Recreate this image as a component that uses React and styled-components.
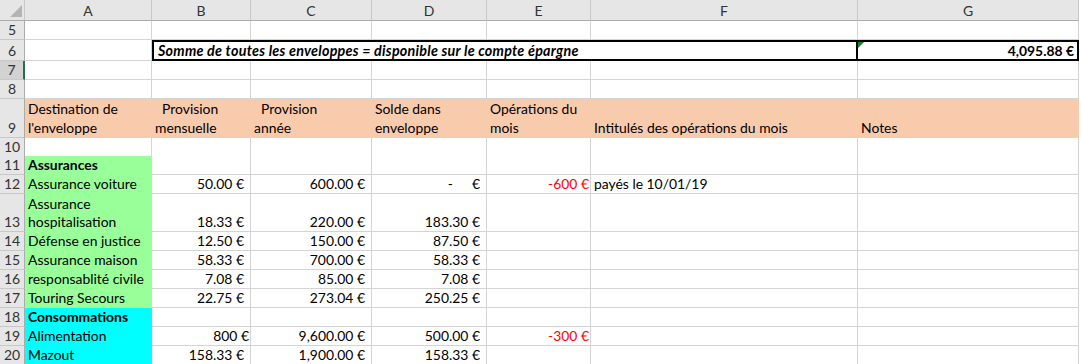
import React from 'react';
import styled, { createGlobalStyle } from 'styled-components';

const GlobalStyle = createGlobalStyle`
  html, body {
    margin: 0;
    padding: 0;
    background: #fff;
    overflow: hidden;
  }
`;

// row header + columns A..G
const COLS = '25px 127px 99px 121px 115px 104px 267px 221px';

const GREEN = '#99ff99';
const CYAN = '#00ffff';
const SALMON = '#f8cbad';

const Sheet = styled.div`
  width: 1081px;
  height: 364px;
  overflow: hidden;
  font-family: Lato, 'Liberation Sans', sans-serif;
  font-size: 13.9px;
  color: #000;
`;

const Row = styled.div`
  display: grid;
  grid-template-columns: ${COLS};
  height: ${(p) => p.$h || 19}px;
`;

const ColHead = styled.div`
  box-sizing: border-box;
  background: #e6e6e6;
  border-right: 1px solid #c8c8c8;
  border-bottom: 1px solid #ababab;
  display: flex;
  align-items: center;
  justify-content: center;
  color: #333;
  font-size: 14px;
`;

const Corner = styled(ColHead)`
  svg {
    display: block;
  }
`;

const RowHead = styled.div`
  box-sizing: border-box;
  background: ${(p) => (p.$selected ? '#d2d2d2' : '#e6e6e6')};
  border-bottom: 1px solid #c8c8c8;
  border-right: ${(p) => (p.$selected ? '2px solid #217346' : '1px solid #ababab')};
  display: flex;
  align-items: flex-end;
  justify-content: center;
  line-height: 18px;
  color: #333;
  font-size: 14px;
`;

const Cell = styled.div`
  box-sizing: border-box;
  grid-column: span ${(p) => p.$span || 1};
  background: ${(p) => p.$bg || '#fff'};
  border-right: 1px solid ${(p) => p.$bg || '#d4d4d4'};
  border-bottom: 1px solid ${(p) => p.$bg || '#d4d4d4'};
  display: flex;
  align-items: flex-end;
  justify-content: ${(p) => (p.$right ? 'flex-end' : 'flex-start')};
  padding: 0 ${(p) => p.$pr ?? 3}px 0 3px;
  line-height: 18px;
  white-space: pre;
  overflow: hidden;
  font-weight: ${(p) => (p.$bold ? 700 : 400)};
  color: ${(p) => (p.$red ? '#ff0000' : '#000')};
`;

const HeaderCell = styled(Cell)`
  line-height: 19px;
`;

const TotalLabel = styled(Cell)`
  border: 2px solid #000;
  font-size: 14.3px;
  font-style: italic;
  font-weight: 700;
  letter-spacing: 0.25px;
  align-items: center;
  padding-left: 4px;
`;

const TotalValue = styled(Cell)`
  position: relative;
  border: 2px solid #000;
  border-left: none;
  font-weight: 700;
  align-items: center;
  padding-right: 3px;

  &::before {
    content: '';
    position: absolute;
    top: 0;
    left: 0;
    border-top: 6px solid #1f7a2a;
    border-right: 6px solid transparent;
  }
`;

const Dash = styled.span`
  margin-right: 19px;
`;

function EmptyRow({ n, h, selected }) {
  return (
    <Row $h={h}>
      <RowHead $selected={selected}>{n}</RowHead>
      <Cell />
      <Cell />
      <Cell />
      <Cell />
      <Cell />
      <Cell />
      <Cell />
    </Row>
  );
}

function DataRow({ n, h, a, bg, bold, b, bPad = 6, c, d, e, f }) {
  return (
    <Row $h={h}>
      <RowHead>{n}</RowHead>
      <Cell $bg={bg} $bold={bold}>{a}</Cell>
      <Cell $right $pr={bPad}>{b}</Cell>
      <Cell $right $pr={6}>{c}</Cell>
      <Cell $right $pr={6}>{d}</Cell>
      <Cell $right $pr={1} $red>{e}</Cell>
      <Cell>{f}</Cell>
      <Cell />
    </Row>
  );
}

export default function App() {
  return (
    <Sheet>
      <GlobalStyle />
      <Row $h={21}>
        <Corner>
          <svg width="24" height="20" viewBox="0 0 24 20">
            <polygon points="22,5 22,17 10,17" fill="#b4b4b4" />
          </svg>
        </Corner>
        {['A', 'B', 'C', 'D', 'E', 'F', 'G'].map((l) => (
          <ColHead key={l}>{l}</ColHead>
        ))}
      </Row>

      <EmptyRow n={5} h={19} />

      <Row $h={21}>
        <RowHead>6</RowHead>
        <Cell />
        <TotalLabel $span={5}>Somme de toutes les enveloppes = disponible sur le compte épargne</TotalLabel>
        <TotalValue $right>4,095.88 €</TotalValue>
      </Row>

      <EmptyRow n={7} selected />
      <EmptyRow n={8} />

      <Row $h={39}>
        <RowHead>9</RowHead>
        <HeaderCell $bg={SALMON}>{'Destination de\nl\'enveloppe'}</HeaderCell>
        <HeaderCell $bg={SALMON}>{'  Provision\nmensuelle'}</HeaderCell>
        <HeaderCell $bg={SALMON}>{'  Provision\nannée'}</HeaderCell>
        <HeaderCell $bg={SALMON}>{'Solde dans\nenveloppe'}</HeaderCell>
        <HeaderCell $bg={SALMON}>{'Opérations du\nmois'}</HeaderCell>
        <HeaderCell $bg={SALMON}>Intitulés des opérations du mois</HeaderCell>
        <HeaderCell $bg={SALMON}>Notes</HeaderCell>
      </Row>

      <EmptyRow n={10} h={18} />

      <DataRow n={11} a="Assurances" bg={GREEN} bold />
      <DataRow
        n={12}
        a="Assurance voiture"
        bg={GREEN}
        b="50.00 €"
        c="600.00 €"
        d={<><Dash>-</Dash>€</>}
        e="-600 €"
        f="payés le 10/01/19"
      />
      <DataRow n={13} h={38} a={'Assurance\nhospitalisation'} bg={GREEN} b="18.33 €" c="220.00 €" d="183.30 €" />
      <DataRow n={14} a="Défense en justice" bg={GREEN} b="12.50 €" c="150.00 €" d="87.50 €" />
      <DataRow n={15} a="Assurance maison" bg={GREEN} b="58.33 €" c="700.00 €" d="58.33 €" />
      <DataRow n={16} a="responsablité civile" bg={GREEN} b="7.08 €" c="85.00 €" d="7.08 €" />
      <DataRow n={17} a="Touring Secours" bg={GREEN} b="22.75 €" c="273.04 €" d="250.25 €" />
      <DataRow n={18} a="Consommations" bg={CYAN} bold />
      <DataRow n={19} a="Alimentation" bg={CYAN} b="800 €" bPad={1} c="9,600.00 €" d="500.00 €" e="-300 €" />
      <DataRow n={20} a="Mazout" bg={CYAN} b="158.33 €" c="1,900.00 €" d="158.33 €" />
    </Sheet>
  );
}
